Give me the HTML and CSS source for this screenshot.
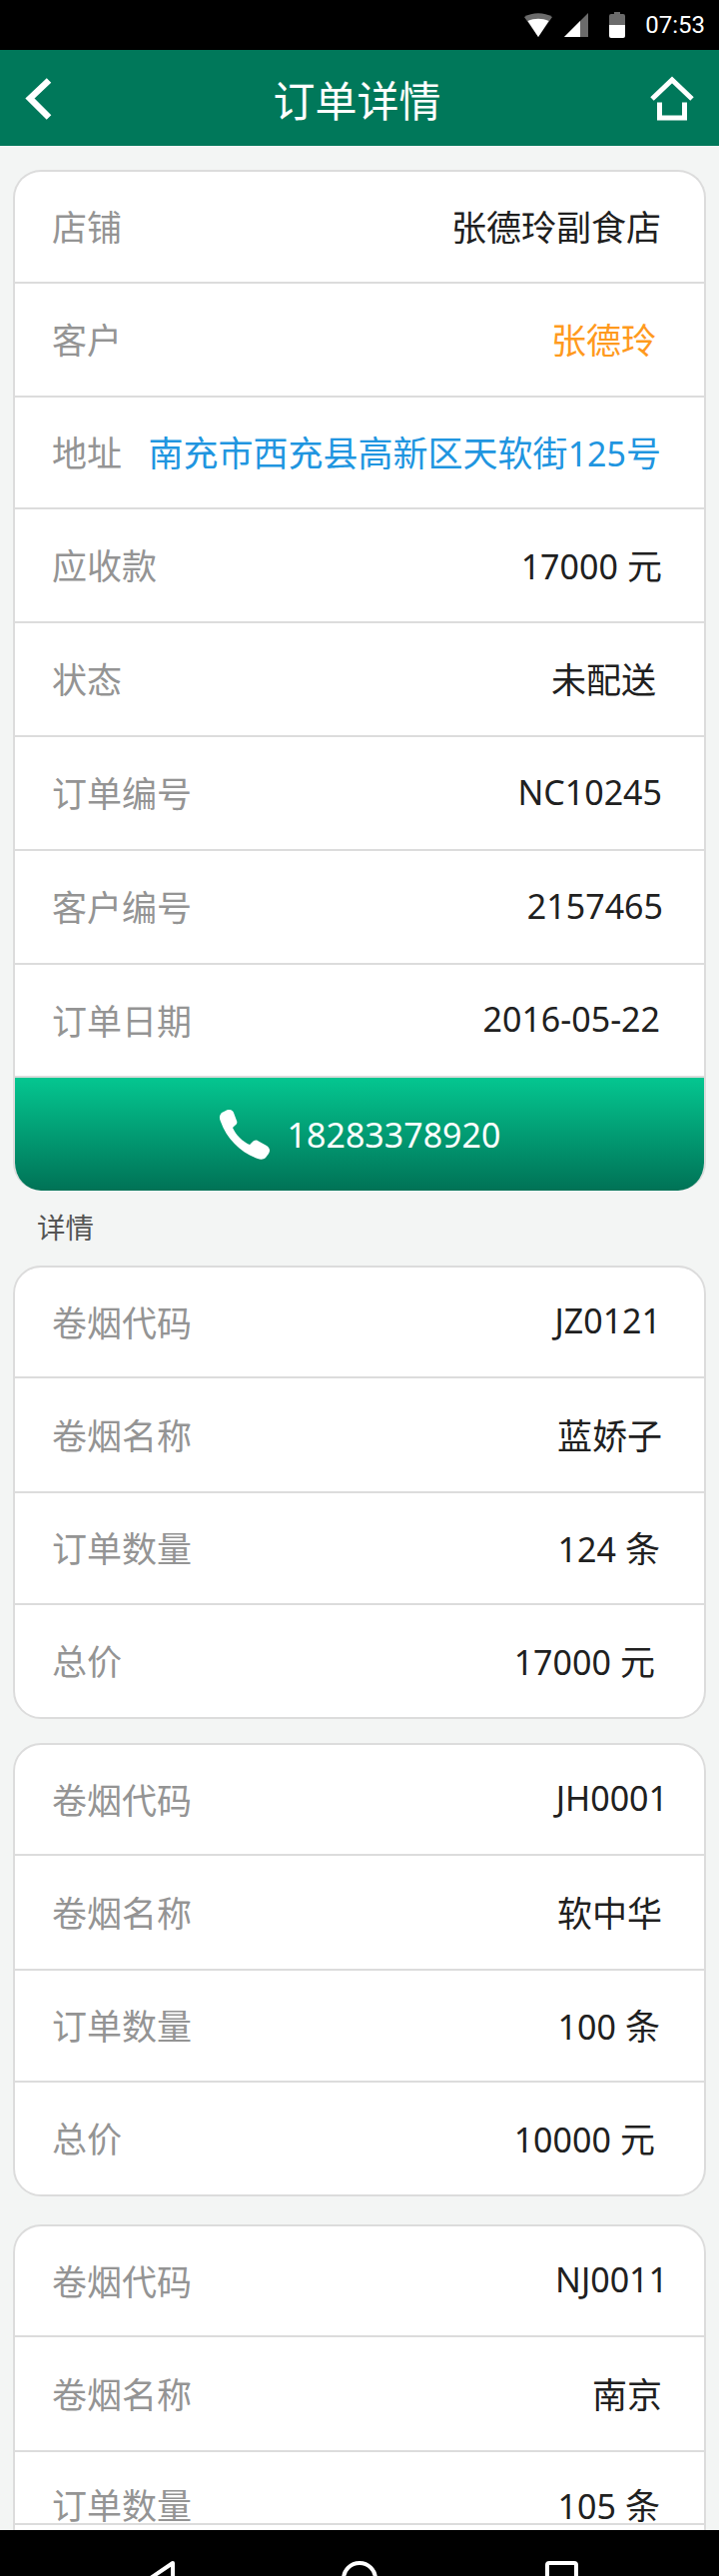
FILE: index.html
```html
<!DOCTYPE html>
<html lang="zh-CN">

<head>
    <meta charset="UTF-8">
    <title>订单详情</title>
    <link rel="stylesheet" href="styles.css">
</head>

<body>
    <div class="screen">
        <div class="status-bar">
            <svg class="status-icon wifi" viewBox="0 0 28 24">
                <path d="M0 4 C8 -1 20 -1 28 4 L14 24 Z" fill="#6b6b6b" />
                <path d="M3.5 8 C10 5 18 5 24.500 8 L14 24 Z" fill="#fff" />
            </svg>
            <svg class="status-icon signal" viewBox="0 0 24 24">
                <path d="M0 24 L24 0 L24 24 Z" fill="#6b6b6b" />
                <path d="M0 24 L16 8 L16 24 Z" fill="#fff" />
            </svg>
            <svg class="status-icon battery" viewBox="0 0 16 26">
                <path d="M5 0 H11 V2 H14 Q16 2 16 4 V14 H0 V4 Q0 2 2 2 H5 Z" fill="#6b6b6b" />
                <path d="M0 13 H16 V24 Q16 26 14 26 H2 Q0 26 0 24 Z" fill="#fff" />
            </svg>
            <span class="time">07:53</span>
        </div>

        <div class="header">
            <svg class="back" viewBox="0 0 46 60">
                <path d="M30 12.500 L11 30.500 L30 49.500" fill="none" stroke="#fff" stroke-width="6.5" />
            </svg>
            <h1>订单详情</h1>
            <svg class="home" viewBox="0 0 46 46">
                <path d="M3 24 L23 5 L43 24" fill="none" stroke="#fff" stroke-width="5" />
                <path d="M10.5 27.500 V43 H35.500 V27.500" fill="none" stroke="#fff" stroke-width="5" />
            </svg>
        </div>

        <div class="content">
            <div class="card card-order">
                <div class="row"><span class="label">店铺</span><span class="value out-1">张德玲副食店</span></div>
                <div class="row"><span class="label">客户</span><span class="value orange in-4">张德玲</span></div>
                <div class="row"><span class="label">地址</span><span class="value blue out-1">南充市西充县高新区天软街<span class="num">125</span>号</span></div>
                <div class="row"><span class="label">应收款</span><span class="value out-2"><span class="num">17000</span> 元</span></div>
                <div class="row"><span class="label">状态</span><span class="value in-4">未配送</span></div>
                <div class="row"><span class="label">订单编号</span><span class="value num out-2">NC10245</span></div>
                <div class="row"><span class="label">客户编号</span><span class="value num out-3">2157465</span></div>
                <div class="row"><span class="label">订单日期</span><span class="value num">2016-05-22</span></div>
                <div class="call-btn">
                    <svg class="phone" viewBox="0 0 52 50">
                        <path d="M7 1 C10 -1 14 0 15 3 L18 11 C19 13 18 15 16 16 L14 18 C17 25 24 32 31 35 L34 32 C35 31 37 30 39 31 L48 36 C51 38 52 41 50 44 L47 48 C45 50 42 50 39 49 C22 43 8 29 2 12 C0 8 1 5 3 3 Z" fill="#fff" />
                    </svg>
                    <span>18283378920</span>
                </div>
            </div>

            <div class="section-title">详情</div>

            <div class="card card-item">
                <div class="row"><span class="label">卷烟代码</span><span class="value num out-1">JZ0121</span></div>
                <div class="row"><span class="label">卷烟名称</span><span class="value out-2">蓝娇子</span></div>
                <div class="row"><span class="label">订单数量</span><span class="value"><span class="num">124</span> 条</span></div>
                <div class="row"><span class="label">总价</span><span class="value in-5"><span class="num">17000</span> 元</span></div>
            </div>

            <div class="card card-item card-far">
                <div class="row"><span class="label">卷烟代码</span><span class="value num out-8">JH0001</span></div>
                <div class="row"><span class="label">卷烟名称</span><span class="value out-2">软中华</span></div>
                <div class="row"><span class="label">订单数量</span><span class="value"><span class="num">100</span> 条</span></div>
                <div class="row"><span class="label">总价</span><span class="value in-5"><span class="num">10000</span> 元</span></div>
            </div>

            <div class="card card-item card-last">
                <div class="row"><span class="label">卷烟代码</span><span class="value num out-8">NJ0011</span></div>
                <div class="row"><span class="label">卷烟名称</span><span class="value out-2">南京</span></div>
                <div class="row row-cut"><span class="label">订单数量</span><span class="value"><span class="num">105</span> 条</span></div>
            </div>
        </div>

        <div class="nav-bar">
            <svg class="nav-icon" viewBox="0 0 720 46">
                <path d="M173 33 L145 52 L173 72 Z" fill="none" stroke="#fff" stroke-width="4" stroke-linejoin="round" />
                <circle cx="360" cy="49" r="16" fill="none" stroke="#fff" stroke-width="4" />
                <rect x="548" y="33" width="29" height="40" rx="2" fill="none" stroke="#fff" stroke-width="4" />
            </svg>
        </div>
    </div>
</body>

</html>
```

FILE: styles.css
```css
* {
    box-sizing: border-box;
}

body {
    margin: 0;
    background: #f3f5f4;
    font-family: "Noto Sans", "Noto Sans CJK SC", sans-serif;
}

.screen {
    display: flex;
    flex-direction: column;
    height: 100vh;
    overflow: hidden;
}

/* status bar */
.status-bar {
    display: flex;
    align-items: center;
    justify-content: flex-end;
    flex: none;
    height: 50px;
    padding-right: 14px;
    background: #000;
}

.status-icon {
    display: block;
}

.wifi {
    width: 28px;
    height: 24px;
    margin-right: 12px;
}

.signal {
    width: 24px;
    height: 24px;
    margin-right: 21px;
}

.battery {
    width: 16px;
    height: 26px;
    margin-right: 20px;
}

.time {
    color: #fff;
    font-family: Roboto, sans-serif;
    font-size: 24px;
}

/* green title bar */
.header {
    display: flex;
    align-items: center;
    justify-content: space-between;
    flex: none;
    height: 96px;
    padding: 0 24px 0 19px;
    background: #00785a;
}

.header h1 {
    margin: 0;
    color: #fff;
    font-size: 42px;
    font-weight: normal;
}

.back {
    width: 46px;
    height: 60px;
}

.home {
    width: 46px;
    height: 46px;
}

/* scrolling part */
.content {
    flex: 1;
    min-height: 0;
    overflow: hidden;
    padding: 24px 13px 0;
}

.card {
    display: flex;
    flex-direction: column;
    overflow: hidden;
    background: #fff;
    border: 2px solid #dcdcdc;
    border-radius: 28px;
}

.card-order {
    border-bottom: none;
}

.card-item {
    margin-bottom: 24px;
}

.card-far {
    margin-bottom: 28px;
}

/* runs on under the nav bar */
.card-last {
    height: 340px;
    margin-bottom: 0;
}

.row {
    display: flex;
    align-items: center;
    justify-content: space-between;
    flex: none;
    height: 114px;
    padding: 0 44px 3px 37px;
    border-bottom: 2px solid #dcdcdc;
    font-size: 35px;
}

/* the rows aren't the same height in the picture */
.card-order .row:nth-child(1),
.card-order .row:nth-child(3) {
    height: 112px;
}

.card-order .row:nth-child(8) {
    height: 113px;
}

.card-item .row:nth-child(1) {
    height: 111px;
}

.card-item .row:nth-child(2) {
    height: 115px;
}

.card-item .row:nth-child(3) {
    height: 112px;
}

.card-item .row:nth-child(4) {
    height: 112px;
    border-bottom: none;
}

.card-item .row.row-cut {
    height: 73px;
    padding-top: 36px;
    padding-bottom: 0;
    line-height: 1;
}

.label {
    color: #949494;
}

.value {
    color: #202020;
}

.num {
    font-size: 34px;
}

.orange {
    color: #ff9a1e;
}

.blue {
    color: #2095e0;
}

/* hand placed values, they don't share one right edge */
.in-4 {
    margin-right: 4px;
}

.in-5 {
    margin-right: 5px;
}

.out-1 {
    margin-right: -1px;
}

.out-2 {
    margin-right: -2px;
}

.out-3 {
    margin-right: -3px;
}

.out-8 {
    margin-right: -8px;
}

.call-btn {
    display: flex;
    align-items: center;
    justify-content: center;
    gap: 17px;
    flex: none;
    height: 113px;
    color: #fff;
    font-size: 34px;
    background: linear-gradient(#04c690, #007256);
}

.phone {
    width: 52px;
    height: 50px;
}

.section-title {
    height: 75px;
    padding: 15px 0 0 24px;
    color: #555;
    font-size: 28.500px;
}

/* bottom nav, the icons run off the picture */
.nav-bar {
    flex: none;
    height: 46px;
    overflow: hidden;
    background: #000;
}

.nav-icon {
    display: block;
    width: 720px;
    height: 46px;
}
```
